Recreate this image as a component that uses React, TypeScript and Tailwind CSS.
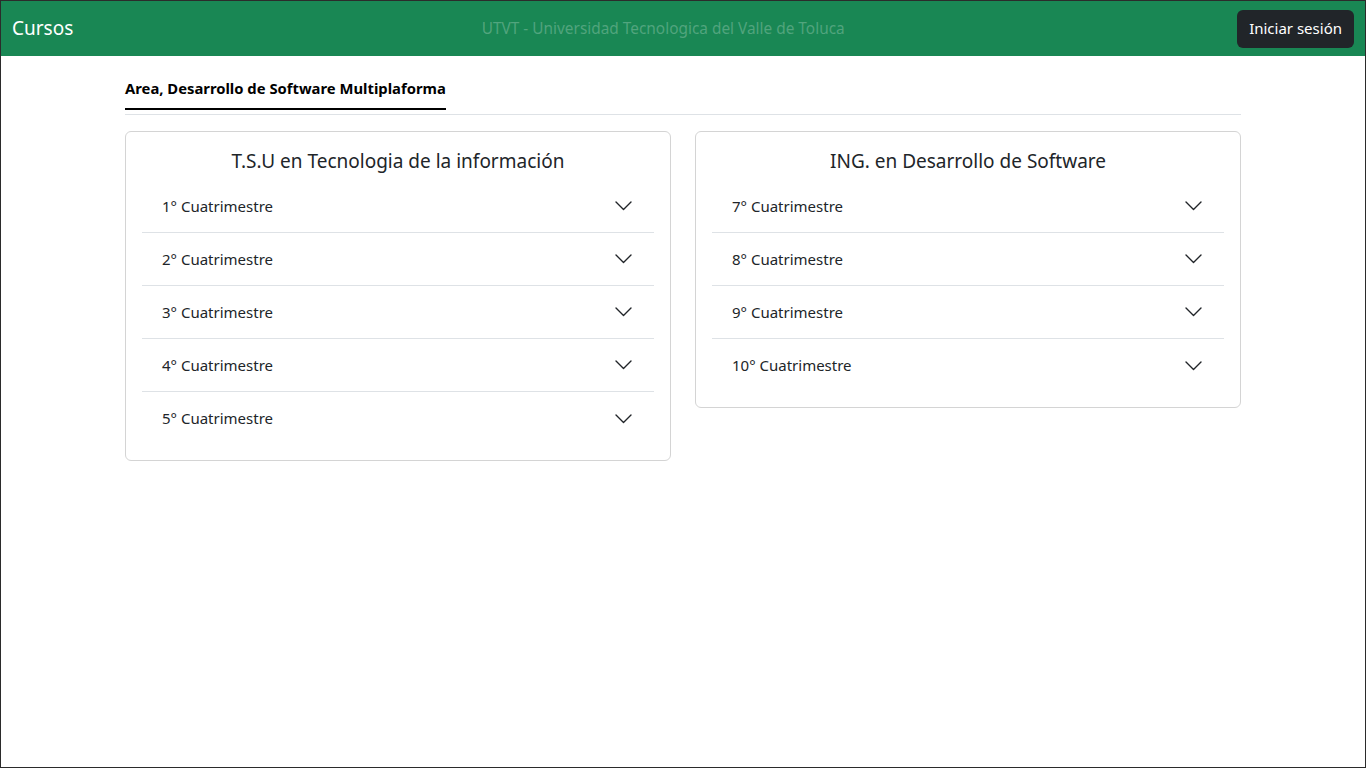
const tsu = ["1° Cuatrimestre", "2° Cuatrimestre", "3° Cuatrimestre", "4° Cuatrimestre", "5° Cuatrimestre"]
const ing = ["7° Cuatrimestre", "8° Cuatrimestre", "9° Cuatrimestre", "10° Cuatrimestre"]

const Chevron = () => (
  <svg width="17" height="10" viewBox="0 0 17 10" fill="none" className="mr-[1px] text-[#212529]">
    <path d="M1 1l7.5 7.5 7.5-7.5" stroke="currentColor" strokeWidth="1.4" strokeLinecap="round" strokeLinejoin="round" />
  </svg>
)

const Card = ({ title, items }: { title: string; items: string[] }) => {
  return (
    <div className="flex-1 self-start rounded-md border border-[#d4d4d4] px-4 pt-4 pb-[15px]">
      <h5 className="mb-2 h-6 pt-[1px] text-center text-[19px] leading-6 text-[#212529]">{title}</h5>
      <div>
        {items.map((item, i) => (
          <div
            key={item}
            className={`flex h-[53px] items-center justify-between pr-[21px] pl-5 ${i < items.length - 1 ? "border-b border-[#dee2e6]" : ""}`}
          >
            <span className="text-[15px] text-[#212529]">{item}</span>
            <Chevron />
          </div>
        ))}
      </div>
    </div>
  )
}

export default function App() {
  return (
    <div
      className="box-border flex h-screen flex-col border border-[#2b2b2b] bg-white"
      style={{ fontFamily: '"Noto Sans", sans-serif' }}
    >
      <nav className="flex h-[55px] items-center justify-between bg-[#198754] pl-[11px] pr-[11px]">
        <span className="mr-4 text-[19px] text-white">Cursos</span>
        <span className="text-[15.4px] text-white/25">UTVT - Universidad Tecnologica del Valle de Toluca</span>
        <button className="h-[38px] rounded-md bg-[#212529] px-3 text-[15px] text-white">Iniciar sesión</button>
      </nav>

      <main className="mx-auto w-[1116px]">
        <div className="mt-[20px] border-b border-[#dee2e6] pb-1">
          <div className="inline-block border-b-2 border-black pb-[8px] text-[14.8px] leading-6 font-bold text-black">
            Area, Desarrollo de Software Multiplaforma
          </div>
        </div>

        <div className="mt-4 flex gap-6">
          <Card title="T.S.U en Tecnologia de la información" items={tsu} />
          <Card title="ING. en Desarrollo de Software" items={ing} />
        </div>
      </main>
    </div>
  )
}
